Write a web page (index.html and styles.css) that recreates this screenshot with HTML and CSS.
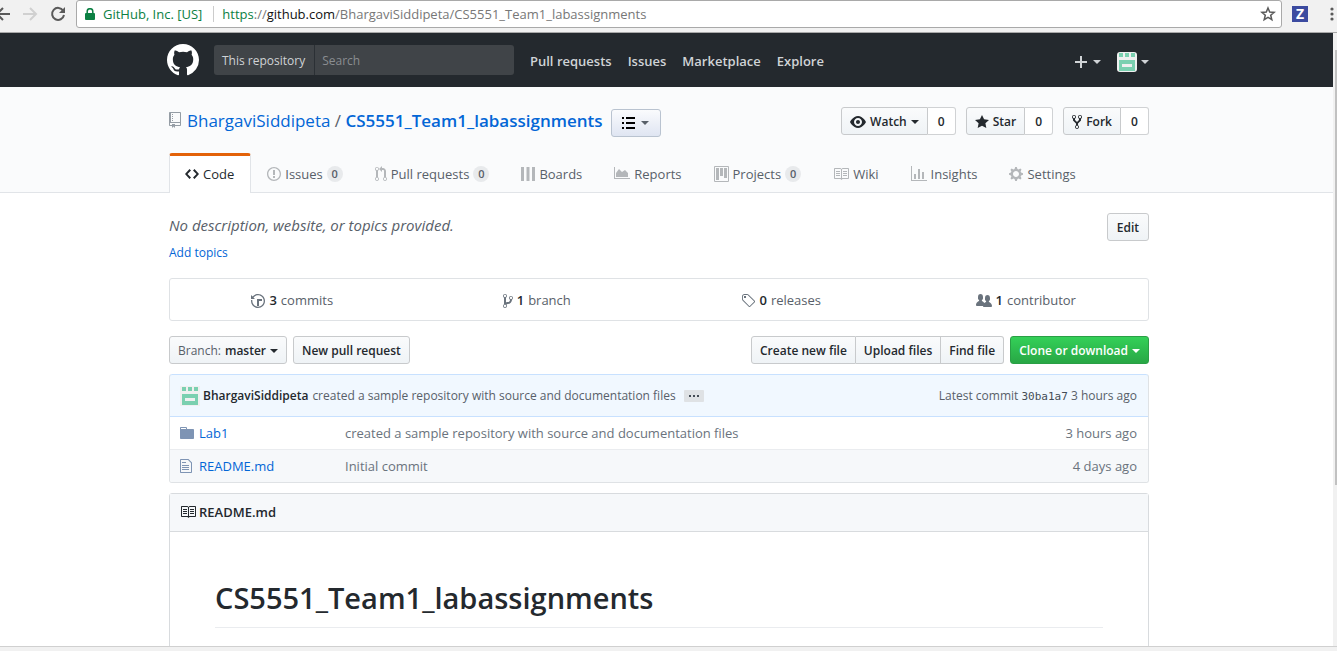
FILE: index.html
```html
<!DOCTYPE html>
<html lang="en">
<head>
<meta charset="utf-8">
<title>BhargaviSiddipeta/CS5551_Team1_labassignments</title>
<link rel="stylesheet" href="styles.css">
</head>
<body>
<svg class="sprite" aria-hidden="true">
  <symbol id="mark" viewBox="0 0 16 16"><path d="M8 0C3.58 0 0 3.58 0 8c0 3.54 2.29 6.53 5.47 7.59.4.07.55-.17.55-.38 0-.19-.01-.82-.01-1.49-2.01.37-2.53-.49-2.69-.94-.09-.23-.48-.94-.82-1.13-.28-.15-.68-.52-.01-.53.63-.01 1.08.58 1.23.82.72 1.21 1.87.87 2.33.66.07-.52.28-.87.51-1.07-1.78-.2-3.64-.89-3.64-3.95 0-.87.31-1.59.82-2.15-.08-.2-.36-1.02.08-2.12 0 0 .67-.21 2.2.82.64-.18 1.32-.27 2-.27.68 0 1.36.09 2 .27 1.53-1.04 2.2-.82 2.2-.82.44 1.1.16 1.92.08 2.12.51.56.82 1.27.82 2.15 0 3.07-1.87 3.75-3.65 3.95.29.25.54.73.54 1.48 0 1.07-.01 1.93-.01 2.2 0 .21.15.46.55.38A8.013 8.013 0 0 0 16 8c0-4.42-3.58-8-8-8z"/></symbol>
  <symbol id="repo" viewBox="0 0 12 16"><path d="M4 9H3V8h1v1zm0-3H3v1h1V6zm0-2H3v1h1V4zm0-2H3v1h1V2zm8-1v12c0 .55-.45 1-1 1H6v2l-1.5-1.5L3 16v-2H1c-.55 0-1-.45-1-1V1c0-.55.45-1 1-1h10c.55 0 1 .45 1 1zm-1 10H1v2h2v-1h3v1h5v-2zm0-10H2v9h9V1z"/></symbol>
  <symbol id="code" viewBox="0 0 14 16"><path d="M9.5 3L8 4.5 11.5 8 8 11.5 9.5 13 14 8 9.5 3zm-5 0L0 8l4.5 5L6 11.5 2.5 8 6 4.5 4.5 3z"/></symbol>
  <symbol id="issue" viewBox="0 0 14 16"><path d="M7 2.3c3.14 0 5.7 2.56 5.7 5.7s-2.56 5.7-5.7 5.7A5.71 5.71 0 0 1 1.3 8c0-3.14 2.56-5.7 5.7-5.7zM7 1C3.14 1 0 4.14 0 8s3.14 7 7 7 7-3.14 7-7-3.14-7-7-7zm1 3H6v5h2V4zm0 6H6v2h2v-2z"/></symbol>
  <symbol id="pull" viewBox="0 0 12 16"><path d="M11 11.28V5c-.03-.78-.34-1.47-.94-2.06C9.46 2.35 8.78 2.03 8 2H7V0L4 3l3 3V4h1c.27.02.48.11.69.31.21.2.3.42.31.69v6.28A1.993 1.993 0 0 0 10 15a1.993 1.993 0 0 0 1-3.72zm-1 2.92c-.66 0-1.2-.55-1.2-1.2 0-.65.55-1.2 1.2-1.2.65 0 1.2.55 1.2 1.2 0 .65-.55 1.2-1.2 1.2zM4 3c0-1.11-.89-2-2-2a1.993 1.993 0 0 0-1 3.72v6.56A1.993 1.993 0 0 0 2 15a1.993 1.993 0 0 0 1-3.72V4.72c.59-.34 1-.98 1-1.72zm-.8 10c0 .66-.55 1.2-1.2 1.2-.65 0-1.2-.55-1.2-1.2 0-.65.55-1.2 1.2-1.2.65 0 1.2.55 1.2 1.2zM2 4.2C1.34 4.2.8 3.65.8 3c0-.65.55-1.2 1.2-1.2.65 0 1.2.55 1.2 1.2 0 .65-.55 1.2-1.2 1.2z"/></symbol>
  <symbol id="boards" viewBox="0 0 14 16"><path d="M0 1h3v14H0zM5.500 1h3v14h-3zM11 1h3v14h-3z"/></symbol>
  <symbol id="reports" viewBox="0 0 16 16"><path d="M0 1h1v11h15v1H0zM2 11V7l3-4 3 3 3-2 3 3v4z"/></symbol>
  <symbol id="project" viewBox="0 0 15 16"><path fill-rule="evenodd" d="M10 12h3V2h-3v10zm-4-2h3V2H6v8zm-4 4h3V2H2v12zm-1 1h13V1H1v14zM14 0H1a1 1 0 0 0-1 1v14a1 1 0 0 0 1 1h13a1 1 0 0 0 1-1V1a1 1 0 0 0-1-1z"/></symbol>
  <symbol id="book" viewBox="0 0 16 16"><path d="M3 5h4v1H3V5zm0 3h4V7H3v1zm0 2h4V9H3v1zm11-5h-4v1h4V5zm0 2h-4v1h4V7zm0 2h-4v1h4V9zm2-6v9c0 .55-.45 1-1 1H9.500l-1 1-1-1H2c-.55 0-1-.45-1-1V3c0-.55.45-1 1-1h5.500l1 1 1-1H15c.55 0 1 .45 1 1zm-8 .5L7.500 3H2v9h6V3.500zm7-.5H9.500l-.5.5V12h6V3z"/></symbol>
  <symbol id="graph" viewBox="0 0 16 16"><path d="M16 14v1H0V0h1v14h15zM5 13H3V8h2v5zm4 0H7V3h2v10zm4 0h-2V6h2v7z"/></symbol>
  <symbol id="gear" viewBox="0 0 14 16"><path d="M14 8.770v-1.600l-1.940-.640-.450-1.090.880-1.840-1.130-1.130-1.810.910-1.090-.450-.690-1.920h-1.600l-.630 1.940-1.110.450-1.840-.880-1.130 1.130.910 1.810-.450 1.090L0 7.230v1.590l1.940.640.450 1.090-.880 1.840 1.130 1.130 1.810-.910 1.090.450.690 1.920h1.590l.630-1.940 1.110-.450 1.840.880 1.130-1.130-.920-1.810.470-1.090L14 8.750v.020zM7 11c-1.660 0-3-1.340-3-3s1.340-3 3-3 3 1.340 3 3-1.340 3-3 3z"/></symbol>
  <symbol id="eye" viewBox="0 0 16 16"><path d="M8.060 2C3 2 0 8 0 8s3 6 8.060 6C13 14 16 8 16 8s-3-6-7.940-6zM8 12c-2.200 0-4-1.780-4-4 0-2.200 1.800-4 4-4 2.220 0 4 1.800 4 4 0 2.220-1.780 4-4 4zm2-4c0 1.110-.890 2-2 2-1.110 0-2-.890-2-2 0-1.110.890-2 2-2 1.110 0 2 .890 2 2z"/></symbol>
  <symbol id="star" viewBox="0 0 14 16"><path d="M14 6l-4.900-.640L7 1 4.900 5.360 0 6l3.600 3.260L2.670 14 7 11.670 11.330 14l-.930-4.740z"/></symbol>
  <symbol id="fork" viewBox="0 0 10 16"><path d="M8 1a1.993 1.993 0 0 0-1 3.720V6L5 8 3 6V4.720A1.993 1.993 0 0 0 2 1a1.993 1.993 0 0 0-1 3.720V6.500l3 3v1.780A1.993 1.993 0 0 0 5 15a1.993 1.993 0 0 0 1-3.720V9.500l3-3V4.720A1.993 1.993 0 0 0 8 1zM2 4.200C1.340 4.200.8 3.650.8 3c0-.65.55-1.200 1.200-1.200.65 0 1.200.55 1.200 1.200 0 .65-.55 1.200-1.200 1.200zm3 10c-.66 0-1.200-.55-1.200-1.200 0-.65.55-1.200 1.200-1.200.65 0 1.200.55 1.200 1.200 0 .65-.55 1.200-1.200 1.200zm3-10c-.66 0-1.200-.55-1.200-1.200 0-.65.55-1.200 1.200-1.200.65 0 1.200.55 1.200 1.200 0 .65-.55 1.200-1.200 1.200z"/></symbol>
  <symbol id="history" viewBox="0 0 14 16"><path d="M8 13H6V6h5v2H8v5zM7 1C4.810 1 2.870 2.020 1.590 3.590L0 2v4h4L2.500 4.500C3.550 3.170 5.170 2.300 7 2.300c3.140 0 5.700 2.560 5.700 5.700s-2.560 5.700-5.700 5.700A5.710 5.710 0 0 1 1.300 8c0-.34.03-.67.09-1H.08C.03 7.330 0 7.660 0 8c0 3.860 3.140 7 7 7s7-3.140 7-7-3.140-7-7-7z"/></symbol>
  <symbol id="branch" viewBox="0 0 10 16"><path d="M10 5c0-1.110-.89-2-2-2a1.993 1.993 0 0 0-1 3.720v.3c-.02.52-.23.98-.63 1.380-.4.4-.86.61-1.380.63-.83.02-1.480.16-2 .45V4.720a1.993 1.993 0 0 0-1-3.720C.88 1 0 1.890 0 3a2 2 0 0 0 1 1.720v6.560c-.59.35-1 .99-1 1.720 0 1.110.89 2 2 2 1.110 0 2-.89 2-2 0-.53-.2-1-.53-1.360.09-.06.48-.41.59-.47.25-.11.56-.17.94-.17 1.050-.05 1.950-.45 2.750-1.250S8.950 7.770 9 6.730h-.02C9.590 6.370 10 5.730 10 5zM2 1.800c.66 0 1.200.55 1.200 1.200 0 .65-.55 1.200-1.200 1.200C1.350 4.200.8 3.650.8 3c0-.65.55-1.200 1.200-1.200zm0 12.410c-.66 0-1.200-.55-1.200-1.200 0-.65.55-1.200 1.200-1.200.65 0 1.200.55 1.200 1.200 0 .65-.55 1.200-1.200 1.200zm6-8c-.66 0-1.200-.55-1.200-1.200 0-.65.55-1.200 1.200-1.200.65 0 1.200.55 1.200 1.200 0 .65-.55 1.200-1.200 1.200z"/></symbol>
  <symbol id="tag" viewBox="0 0 14 16"><path d="M7.730 1.730C7.260 1.260 6.620 1 5.960 1H3.500C2.130 1 1 2.130 1 3.500v2.470c0 .66.27 1.300.73 1.770l6.060 6.060c.39.39 1.020.39 1.410 0l4.590-4.590a.996.996 0 0 0 0-1.410L7.730 1.730zM2.380 7.090c-.31-.3-.47-.7-.47-1.130V3.500c0-.88.72-1.590 1.590-1.590h2.470c.42 0 .83.16 1.130.47l6.140 6.130-4.730 4.730-6.130-6.150zM3.010 3h2v2H3V3h.01z"/></symbol>
  <symbol id="people" viewBox="0 0 16 16"><path d="M16 12.999c0 .439-.45 1-1 1H7.995c-.539 0-.994-.447-.995-.999H1c-.54 0-1-.561-1-1 0-2.634 3-4 3-4s.229-.409 0-1c-.841-.621-1.058-.59-1-3 .058-2.419 1.367-3 2.500-3s2.442.58 2.500 3c.058 2.410-.159 2.379-1 3-.229.59 0 1 0 1s1.549.711 2.420 2.088C9.196 9.369 10 8.999 10 8.999s.229-.409 0-1c-.841-.62-1.058-.59-1-3 .058-2.419 1.367-3 2.500-3s2.437.581 2.495 3c.059 2.410-.158 2.380-1 3-.229.59 0 1 0 1s3.005 1.366 3.005 4"/></symbol>
  <symbol id="folder" viewBox="0 0 14 16"><path d="M13 4H7V3c0-.66-.31-1-1-1H1c-.55 0-1 .45-1 1v10c0 .55.45 1 1 1h12c.55 0 1-.45 1-1V5c0-.55-.45-1-1-1zM6 4H1V3h5v1z"/></symbol>
  <symbol id="file" viewBox="0 0 12 16"><path d="M6 5H2V4h4v1zM2 8h7V7H2v1zm0 2h7V9H2v1zm0 2h7v-1H2v1zm10-7.500V14c0 .55-.45 1-1 1H1c-.55 0-1-.45-1-1V2c0-.55.45-1 1-1h7.500L12 4.500zM11 5L8 2H1v12h10V5z"/></symbol>
  <symbol id="avatar" viewBox="0 0 20 20"><rect width="20" height="20" fill="#f0f0f0"/><path fill="#7bd0b0" fill-rule="evenodd" d="M2 1h4v4H2zM8 1h4v4H8zM14 1h4v4h-4zM2 8h16v11H2zM5 12v3h10v-3z"/></symbol>
</svg>

<div class="toolbar">
  <button class="tool" aria-label="Back"><svg width="16" height="16" viewBox="0 0 16 16"><path d="M16 8H3M9 2L3 8l6 6" fill="none" stroke="#5a5a5a" stroke-width="2"/></svg></button>
  <button class="tool" aria-label="Forward"><svg width="16" height="16" viewBox="0 0 16 16"><path d="M1 8h13M8 2l6 6-6 6" fill="none" stroke="#d0d0d0" stroke-width="2"/></svg></button>
  <button class="tool reload" aria-label="Reload"><svg width="16" height="16" viewBox="0 0 16 16"><path d="M13.200 4.700A6 6 0 1 0 14 9" fill="none" stroke="#5a5a5a" stroke-width="2"/><path d="M15 1v6H9z" fill="#5a5a5a"/></svg></button>
  <div class="address">
    <svg width="10" height="12" viewBox="0 0 10 12"><path d="M1 5h8q1 0 1 1v5q0 1-1 1H1q-1 0-1-1V6q0-1 1-1z" fill="#0b8043"/><path d="M2.200 6V3.500a2.800 2.800 0 0 1 5.600 0V6" fill="none" stroke="#0b8043" stroke-width="1.500"/></svg>
    <span class="secure">GitHub, Inc. [US]</span>
    <span class="url"><span class="scheme">https</span>://<span class="host">github.com</span>/BhargaviSiddipeta/CS5551_Team1_labassignments</span>
    <button class="tool bookmark" aria-label="Bookmark"><svg width="16" height="16" viewBox="0 0 16 16"><path d="M8 2l1.700 4.100 4.400.3-3.400 2.900 1.100 4.300L8 11.300l-3.800 2.300 1.100-4.300-3.400-2.900 4.400-.3z" fill="none" stroke="#5a5a5a" stroke-width="1.500"/></svg></button>
  </div>
  <button class="ext" aria-label="Extension">Z</button>
  <button class="tool" aria-label="Menu"><svg width="6" height="16" viewBox="0 0 6 16"><g fill="#5a5a5a"><circle cx="3" cy="3" r="1.600"/><circle cx="3" cy="8" r="1.600"/><circle cx="3" cy="13" r="1.600"/></g></svg></button>
</div>

<div class="viewport">
<div class="page">
  <header class="site-header">
    <div class="container site-row">
      <a href="#" class="logo" aria-label="GitHub"><svg width="32" height="32"><use href="#mark"/></svg></a>
      <form class="search">
        <label for="q">This repository</label>
        <input id="q" type="text" placeholder="Search">
      </form>
      <nav class="site-nav">
        <a href="#">Pull requests</a><a href="#">Issues</a><a href="#">Marketplace</a><a href="#">Explore</a>
      </nav>
      <div class="user-nav">
        <button aria-label="Create new"><svg width="12" height="12" viewBox="0 0 12 12"><path d="M0 6h12M6 0v12" stroke="#d0d3d6" stroke-width="2"/></svg><span class="caret"></span></button>
        <button aria-label="Profile"><svg class="face" width="20" height="20"><use href="#avatar"/></svg><span class="caret"></span></button>
      </div>
    </div>
  </header>

  <div class="repohead">
    <div class="container">
      <div class="repo-row">
        <h1 class="repo-title">
          <svg width="12" height="16"><use href="#repo"/></svg>
          <span><a href="#">BhargaviSiddipeta</a> / <a href="#" class="name">CS5551_Team1_labassignments</a></span>
        </h1>
        <button class="list-btn" aria-label="List"><svg width="13" height="12" viewBox="0 0 13 12"><path d="M0 0h2v2H0zM4 0h9v2H4zM0 5h2v2H0zM4 5h9v2H4zM0 10h2v2H0zM4 10h9v2H4z"/></svg><span class="caret"></span></button>
        <div class="social">
          <div class="group"><button class="btn"><svg width="16" height="16"><use href="#eye"/></svg>Watch<span class="caret"></span></button><a href="#" class="count">0</a></div>
          <div class="group"><button class="btn"><svg width="14" height="16"><use href="#star"/></svg>Star</button><a href="#" class="count">0</a></div>
          <div class="group"><button class="btn"><svg width="10" height="16"><use href="#fork"/></svg>Fork</button><a href="#" class="count">0</a></div>
        </div>
      </div>
      <nav class="tabs">
        <a href="#" class="tab selected"><svg width="14" height="16"><use href="#code"/></svg>Code</a>
        <a href="#" class="tab"><svg width="14" height="16"><use href="#issue"/></svg>Issues<span class="counter">0</span></a>
        <a href="#" class="tab"><svg width="12" height="16"><use href="#pull"/></svg>Pull requests<span class="counter">0</span></a>
        <a href="#" class="tab"><svg width="14" height="16"><use href="#boards"/></svg>Boards</a>
        <a href="#" class="tab"><svg width="16" height="16"><use href="#reports"/></svg>Reports</a>
        <a href="#" class="tab"><svg width="15" height="16"><use href="#project"/></svg>Projects<span class="counter">0</span></a>
        <a href="#" class="tab"><svg width="16" height="16"><use href="#book"/></svg>Wiki</a>
        <a href="#" class="tab"><svg width="16" height="16"><use href="#graph"/></svg>Insights</a>
        <a href="#" class="tab"><svg width="14" height="16"><use href="#gear"/></svg>Settings</a>
      </nav>
    </div>
  </div>

  <main class="content">
    <div class="container">
    <div class="about">
      <div>
        <p class="desc">No description, website, or topics provided.</p>
        <a href="#" class="topics">Add topics</a>
      </div>
      <button class="btn">Edit</button>
    </div>

    <ul class="stats">
      <li><a href="#"><svg width="14" height="16"><use href="#history"/></svg><b>3</b> commits</a></li>
      <li><a href="#"><svg width="10" height="16"><use href="#branch"/></svg><b>1</b> branch</a></li>
      <li><a href="#"><svg width="14" height="16"><use href="#tag"/></svg><b>0</b> releases</a></li>
      <li><a href="#"><svg width="16" height="16"><use href="#people"/></svg><b>1</b> contributor</a></li>
    </ul>

    <div class="actions">
      <button class="btn"><span class="light">Branch:</span>master<span class="caret"></span></button>
      <button class="btn">New pull request</button>
      <div class="group push"><button class="btn">Create new file</button><button class="btn">Upload files</button><button class="btn">Find file</button></div>
      <button class="btn primary">Clone or download<span class="caret"></span></button>
    </div>

    <section class="files">
      <div class="commit">
        <svg width="20" height="20"><use href="#avatar"/></svg>
        <a href="#" class="author">BhargaviSiddipeta</a>
        <a href="#" class="message">created a sample repository with source and documentation files</a>
        <button class="more" aria-label="Show details"><svg width="10" height="2" viewBox="0 0 10 2"><path d="M0 0h2v2H0zM4 0h2v2H4zM8 0h2v2H8z" fill="#444d56"/></svg></button>
        <span class="latest">Latest commit <a href="#">30ba1a7</a> 3 hours ago</span>
      </div>
      <table>
        <tr><td class="icon"><svg width="14" height="16"><use href="#folder"/></svg></td><td class="fname"><a href="#">Lab1</a></td><td>created a sample repository with source and documentation files</td><td class="age">3 hours ago</td></tr>
        <tr class="alt"><td class="icon"><svg width="12" height="16"><use href="#file"/></svg></td><td class="fname"><a href="#">README.md</a></td><td>Initial commit</td><td class="age">4 days ago</td></tr>
      </table>
    </section>

    <section class="readme">
      <h3><svg width="16" height="16"><use href="#book"/></svg>README.md</h3>
      <article><h1>CS5551_Team1_labassignments</h1></article>
    </section>
    </div>
  </main>
</div>
<div class="scrollbar"><div class="thumb"></div></div>
</div>
<div class="bottom-edge"></div>
</body>
</html>
```

FILE: styles.css
```css
* { box-sizing: border-box; }
body {
  margin: 0;
  height: 100vh;
  display: flex;
  flex-direction: column;
  overflow: hidden;
  background: #fff;
  color: #24292e;
  font: 13px/20px "Open Sans", "Noto Sans", sans-serif;
}
a { color: #0366d6; text-decoration: none; }
button { font: inherit; color: inherit; padding: 0; border: 0; background: none; }
svg { fill: currentColor; flex: none; display: block; }
h1, h3, p, ul { margin: 0; padding: 0; }
.sprite { position: absolute; width: 0; height: 0; }
.caret { border: 4px solid transparent; border-top-color: currentColor; border-bottom: 0; }

/* Browser toolbar */
.toolbar {
  flex: none;
  display: flex;
  align-items: center;
  height: 33px;
  padding-bottom: 4px;
  background: #f1f1f1;
  border-bottom: 1px solid #a9a9a9;
}
.toolbar .tool { margin-right: 12px; }
.toolbar > .tool:first-child { margin-left: -6px; }
.toolbar > .reload { margin-right: 10px; }
.toolbar > .tool:last-child { margin: 0 2px 0 0; }
.address {
  flex: 1;
  display: flex;
  align-items: center;
  height: 28px;
  margin-right: 10px;
  padding-left: 8px;
  background: #fff;
  border: 1px solid #a9a9a9;
  border-radius: 3px;
}
.secure { margin: 0 8px; padding-right: 11px; border-right: 1px solid #ccc; line-height: 16px; color: #0b8043; }
.url { color: #777; }
.scheme { color: #0b8043; }
.host { color: #111; }
.address .bookmark { margin: 0 5px 0 auto; }
.ext { width: 16px; height: 16px; margin-right: 21px; background: #3c4ba0; color: #fff; font-size: 14px; font-weight: 700; line-height: 16px; }

/* Scrolling area */
.viewport { flex: 1; display: flex; min-height: 0; }
.page { flex: 1; overflow: hidden; }
.scrollbar { flex: none; width: 4px; padding: 17px 0 0 2px; background: #f1f1f1; }
.thumb { height: 73%; background: #c1c1c1; }
.bottom-edge { flex: none; height: 5px; background: #f1f1f1; border-top: 1px solid #d0d0d0; }
.site-header, .repohead, .content { padding-right: 15px; }
.container { max-width: 980px; margin: 0 auto; }

/* Site header */
.site-header { background: #24292e; color: #d0d3d6; }
.site-row { display: flex; align-items: center; height: 54px; }
.logo { color: #fff; margin-left: -2px; }
.search { display: flex; width: 300px; height: 30px; margin: 0 16px 0 15px; border-radius: 3px; background: #404448; overflow: hidden; font-size: 12px; }
.search label { padding: 0 9px 0 8px; line-height: 32px; border-right: 1px solid #2b3035; white-space: nowrap; }
.search input { flex: 1; min-width: 0; padding: 2px 7px 0; border: 0; background: none; color: #fff; font: inherit; }
.search input::placeholder { color: #8a8d91; }
.site-nav { display: flex; gap: 16px; padding-top: 2px; font-weight: 600; }
.site-nav a { color: #d0d3d6; }
.user-nav { display: flex; gap: 16px; margin-left: auto; padding-top: 4px; }
.user-nav button { display: flex; align-items: center; gap: 6px; }
.user-nav button:last-child { gap: 4px; }
.face { border-radius: 3px; }

/* Repository heading */
.repohead { background: #fafbfc; border-bottom: 1px solid #e1e4e8; }
.repo-row { display: flex; height: 66px; padding-top: 20px; }
.repo-title { display: flex; gap: 6px; font-size: 17px; line-height: 28px; font-weight: 400; color: #586069; white-space: nowrap; }
.repo-title svg { margin-top: 5px; color: #959da5; }
.repo-title .name { font-weight: 600; }
.list-btn {
  display: flex;
  align-items: center;
  justify-content: center;
  gap: 6px;
  width: 50px;
  height: 28px;
  margin: 2px 0 0 8px;
  color: #586069;
  border: 1px solid #b9c3d0;
  border-radius: 3px;
  background: linear-gradient(#fafbfd, #dfe5f2);
}
.list-btn svg { color: #000; }
.social { display: flex; gap: 10px; margin-left: auto; }
.group { display: flex; }
.btn {
  display: flex;
  align-items: center;
  gap: 4px;
  height: 28px;
  padding: 1px 8px 0;
  font-size: 12px;
  font-weight: 600;
  white-space: nowrap;
  color: #24292e;
  background: linear-gradient(#fafbfc, #eff3f6);
  border: 1px solid #c8cacc;
  border-radius: 3px;
}
.count { height: 28px; min-width: 28px; text-align: center; line-height: 27px; font-size: 12px; font-weight: 600; color: #24292e; background: #fff; border: 1px solid #d0d2d4; border-left: 0; border-radius: 0 3px 3px 0; }
.group .btn:not(:last-child) { border-radius: 3px 0 0 3px; }
.group .btn + .btn { border-left: 0; border-radius: 0; }
.group .btn:last-child { border-radius: 0 3px 3px 0; }

/* Tabs */
.tabs { display: flex; margin-bottom: -1px; }
.tab { display: flex; align-items: center; gap: 4px; height: 40px; padding: 2px 16px 0; color: #586069; white-space: nowrap; }
.tab svg { color: #b4b7ba; }
.tab.selected { padding: 0 16px 1px 15px; border: 1px solid #e1e4e8; border-bottom: 0; border-top: 3px solid #e36209; border-radius: 3px 3px 0 0; background: #fff; color: #24292e; }
.tab.selected svg { color: #24292e; }
.counter { min-width: 16px; padding: 0 4px; border-radius: 20px; background: #e8eaec; font-size: 11px; line-height: 16px; font-weight: 600; text-align: center; }

/* Description */
.about { display: flex; justify-content: space-between; padding-top: 20px; }
.about .btn { padding: 1px 9px 0; }
.desc { font-size: 15px; line-height: 25px; font-style: italic; color: #586069; }
.topics { display: block; margin-top: 5px; font-size: 12px; }

/* Totals */
.stats { display: flex; margin: 15px 0; border: 1px solid #dfe2e5; border-radius: 3px; list-style: none; }
.stats li { flex: 1; padding: 11px 0 10px; }
.stats a { display: flex; justify-content: center; gap: 4px; color: #586069; }
.stats svg { margin-top: 3px; color: #6a737d; }
.stats b { font-weight: 600; color: #24292e; }

/* Branch and file actions */
.actions { display: flex; gap: 6px; margin-bottom: 10px; }
.light { font-weight: 400; color: #586069; }
.push { margin-left: auto; }
.primary { color: #fff; border-color: #2a9f45; background: linear-gradient(#34d058, #28a745); }

/* File list */
.files { border: 1px solid #dfe2e5; border-top: 0; border-radius: 3px; overflow: hidden; }
.commit { display: flex; align-items: center; margin: 0 -1px; height: 43px; padding: 0 11px 0 10px; border: 1px solid #c8e1ff; border-radius: 3px 3px 0 0; background: #f1f8ff; font-size: 12px; white-space: nowrap; }
.author { margin: 0 4px 0 3px; color: #24292e; font-weight: 600; }
.message { color: #586069; }
.more { display: flex; align-items: center; justify-content: center; width: 20px; height: 12px; margin-left: 8px; background: #dfe2e5; border-radius: 1px; }
.latest { margin-left: auto; color: #586069; }
.latest a { font: 11px "DejaVu Sans Mono", monospace; color: #444d56; }
.files table { width: 100%; border-collapse: collapse; table-layout: fixed; color: #6a737d; }
.files td { padding: 6px 0; }
.files .alt td { background: #f6f8fa; border-top: 1px solid #eaecef; }
.files .icon { width: 29px; padding-left: 10px; color: #7e94b4; }
.files .fname { width: 146px; }
.files .age { width: 120px; padding-right: 11px; text-align: right; }

/* Readme */
.readme { margin-top: 10px; border: 1px solid #d8dbde; border-radius: 3px 3px 0 0; }
.readme h3 { display: flex; align-items: center; gap: 3px; height: 38px; padding: 0 0 2px 10px; background: #f6f8fa; border-bottom: 1px solid #d8dbde; font-size: 13px; font-weight: 600; }
.readme article { padding: 45px; }
.readme article h1 { padding-bottom: 8px; border-bottom: 1px solid #eaecef; font-size: 29px; line-height: 42px; font-weight: 600; }
```
